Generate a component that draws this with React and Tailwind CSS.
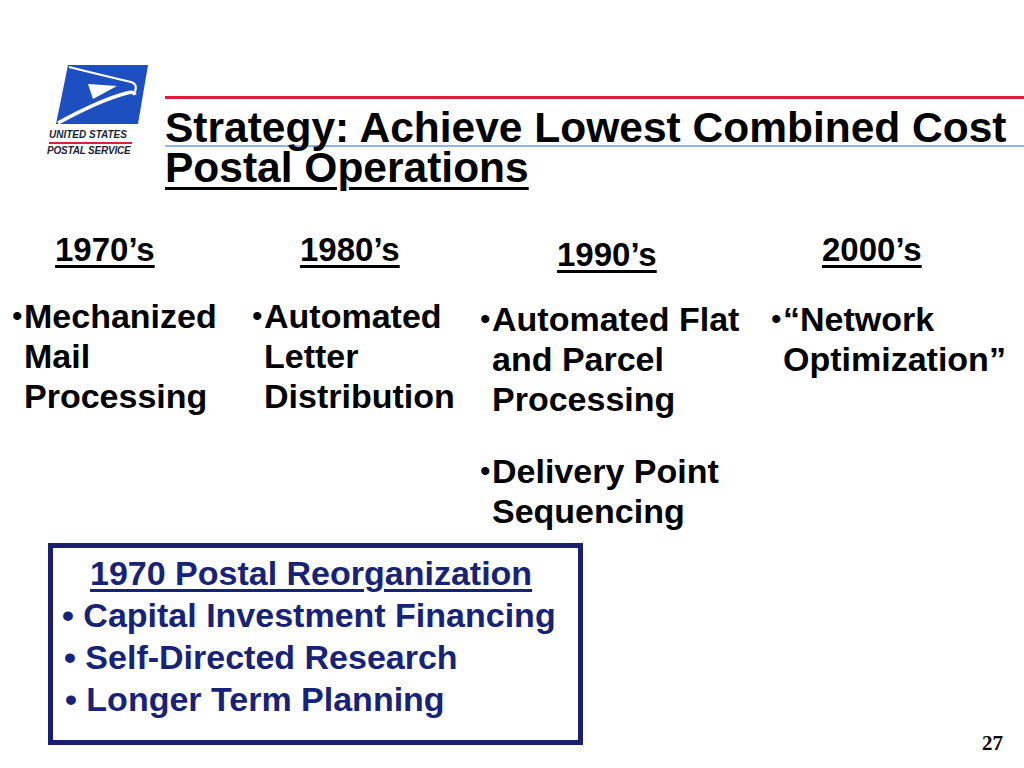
const COLUMNS = [
  {
    year: "1970’s",
    width: "w-[240px]",
    head: "ml-[43px] mt-0",
    body: "mt-[30px]",
    items: [{ lines: ["Mechanized", "Mail", "Processing"] }],
  },
  {
    year: "1980’s",
    width: "w-[228px]",
    head: "ml-[48px] mt-0",
    body: "mt-[30px]",
    items: [{ lines: ["Automated", "Letter", "Distribution"] }],
  },
  {
    year: "1990’s",
    width: "w-[291px]",
    head: "ml-[77px] mt-[5px]",
    body: "mt-[28px]",
    items: [
      { lines: ["Automated Flat", "and Parcel", "Processing"] },
      { lines: ["Delivery Point", "Sequencing"], gap: "mt-[32px]" },
    ],
  },
  {
    year: "2000’s",
    width: "w-[253px]",
    head: "ml-[51px] mt-0",
    body: "mt-[33px]",
    items: [{ lines: ["“Network", "Optimization”"] }],
  },
];

const Logo = () => (
  <div className="flex w-[101px] flex-col">
    <svg width="96" height="66" viewBox="0 0 96 66" className="ml-[8px]">
      <polygon points="13,3 93,3 83,62 1,62" fill="#1d4fc0" />
      <path d="M14 5 Q50 14 76 20 Q83 22 80 30" stroke="#fff" strokeWidth="2.2" fill="none" />
      <polygon points="33,22 62,24 38,37" fill="#fff" />
      <path d="M3 61 Q45 38 72 31 Q79 29 80 33" stroke="#fff" strokeWidth="3.5" fill="none" />
    </svg>
    <div className="mt-[2px] pl-[2px] text-[10px] leading-[10px] font-bold italic text-[#1f1f3a] whitespace-nowrap">
      UNITED STATES
    </div>
    <div className="mt-[2px] ml-[2px] h-[1.5px] w-[83px] bg-[#d8203a]" />
    <div className="mt-[2px] text-[10px] leading-[10px] font-bold italic tracking-[-0.2px] text-[#1f1f3a] whitespace-nowrap">
      POSTAL SERVICE
    </div>
  </div>
);

const Column = ({ col }) => (
  <div className={`${col.width} flex flex-col`}>
    <div className={`${col.head} text-[33px] leading-[33px] font-bold underline decoration-[3px] underline-offset-[4px] whitespace-nowrap`}>
      {col.year}
    </div>
    <div className={col.body}>
      {col.items.map((item, i) => (
        <div key={i} className={`flex ${item.gap || ""}`}>
          <span className="w-[12px] shrink-0 text-[30px] leading-[40px]">•</span>
          <div className="text-[34px] leading-[40px] font-bold whitespace-nowrap">
            {item.lines.map((l) => (
              <div key={l}>{l}</div>
            ))}
          </div>
        </div>
      ))}
    </div>
  </div>
);

export default function App() {
  return (
    <div className="relative h-[768px] w-[1024px] overflow-hidden bg-white text-black font-['Liberation_Sans',Arial,sans-serif]">
      <div className="flex pl-[47px] pt-[62px]">
        <Logo />
        <div className="ml-[17px] flex flex-1 flex-col pt-[34px]">
          <div className="h-[3px] bg-[#e21a3b]" />
          <div className="mt-[11px] h-[37px] border-b-2 border-[#8fb3f2]">
            <div className="text-[42.5px] leading-[35px] font-bold whitespace-nowrap">
              Strategy: Achieve Lowest Combined Cost
            </div>
          </div>
          <div className="text-[42.5px] leading-[42px] font-bold">
            <span className="underline decoration-[3px] underline-offset-[5px]">Postal Operations</span>
          </div>
        </div>
      </div>

      <div className="mt-[44px] flex pl-[12px]">
        {COLUMNS.map((col) => (
          <Column key={col.year} col={col} />
        ))}
      </div>

      <div className="mt-[12px] flex items-start pl-[48px]">
        <div className="h-[202px] w-[535px] border-[5px] border-[#1a1f70] text-[34px] leading-[42px] font-bold text-[#172378]">
          <div className="pt-[4px] pl-[37px] whitespace-nowrap">
            <span className="underline decoration-[3px] underline-offset-[4px]">1970 Postal Reorganization</span>
          </div>
          <div className="pl-[9px] whitespace-nowrap">• Capital Investment Financing</div>
          <div className="pl-[11px] whitespace-nowrap">• Self-Directed Research</div>
          <div className="pl-[12px] whitespace-nowrap">• Longer Term Planning</div>
        </div>
        <div className="ml-auto mr-[21px] mt-[190px] text-[21px] leading-[20px] font-bold font-['Liberation_Serif',serif]">
          27
        </div>
      </div>
    </div>
  );
}
